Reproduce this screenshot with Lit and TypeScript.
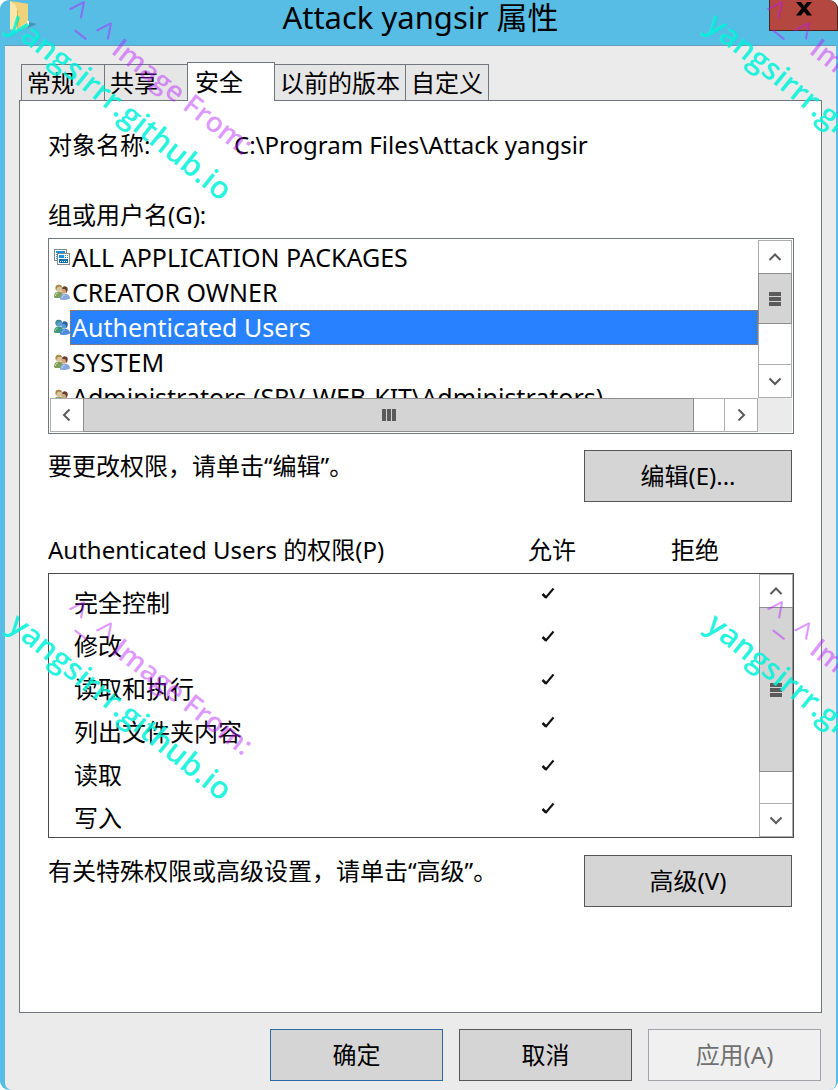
import { LitElement, html, css, svg, nothing } from "lit";
import { customElement, property, state } from "lit/decorators.js";

type Principal = { name: string; icon: "package" | "users" };

const PRINCIPALS: Principal[] = [
  { name: "ALL APPLICATION PACKAGES", icon: "package" },
  { name: "CREATOR OWNER", icon: "users" },
  { name: "Authenticated Users", icon: "users" },
  { name: "SYSTEM", icon: "users" },
  { name: "Administrators (SRV-WEB-KIT\\Administrators)", icon: "users" },
];

const PERMISSIONS = ["完全控制", "修改", "读取和执行", "列出文件夹内容", "读取", "写入"];
const TABS = ["常规", "共享", "安全", "以前的版本", "自定义"];

const CHEVRONS: Record<string, string> = {
  up: "M0.500 9 6 3.500 11.500 9",
  down: "M0.500 3.500 6 9 11.500 3.500",
  left: "M8.500 0.500 3 6 8.500 11.500",
  right: "M3.500 0.500 9 6 3.500 11.500",
};

/** Flat scroll bar with two arrow buttons and a gripped thumb. */
@customElement("scroll-bar")
export class ScrollBar extends LitElement {
  @property({ reflect: true }) axis: "x" | "y" = "y";
  @property({ type: Number }) rest = 40;

  static styles = css`
    :host {
      display: flex;
      box-sizing: border-box;
      background: #fff;
      border: 1px solid #adadad;
    }
    :host([axis="y"]) {
      flex-direction: column;
      width: 34px;
    }
    :host([axis="x"]) {
      height: 34px;
    }
    .arrow {
      flex: none;
      display: flex;
      align-items: center;
      justify-content: center;
      width: 32px;
      height: 32px;
      padding: 0;
      border: 0;
      background: #fff;
    }
    .arrow svg {
      width: 12px;
      height: 12px;
      fill: none;
      stroke: #5a5a5a;
      stroke-width: 2;
    }
    .thumb {
      flex: 1;
      display: flex;
      align-items: center;
      justify-content: center;
      gap: 1px;
      background: #d4d4d4;
      border: 1px solid #8e8e8e;
    }
    :host([axis="y"]) .thumb {
      flex-direction: column;
      margin: 0 -1px;
    }
    :host([axis="x"]) .thumb {
      margin: -1px 0;
    }
    .grip {
      width: 4px;
      height: 12px;
      background: #5a5a5a;
    }
    :host([axis="y"]) .grip {
      width: 12px;
      height: 4px;
    }
    .rest {
      flex: none;
      border: 0 solid #adadad;
    }
    :host([axis="y"]) .rest {
      border-bottom-width: 1px;
    }
    :host([axis="x"]) .rest {
      border-right-width: 1px;
    }
  `;

  private arrow(dir: string, label: string) {
    return html`<button class="arrow" aria-label=${label}>
      <svg viewBox="0 0 12 12" aria-hidden="true"><path d=${CHEVRONS[dir]} /></svg>
    </button>`;
  }

  render() {
    const y = this.axis === "y";
    return html`
      ${this.arrow(y ? "up" : "left", y ? "向上" : "向左")}
      <div class="thumb"><i class="grip"></i><i class="grip"></i><i class="grip"></i></div>
      <div class="rest" style=${`${y ? "height" : "width"}:${this.rest}px`}></div>
      ${this.arrow(y ? "down" : "right", y ? "向下" : "向右")}
    `;
  }
}

/** 16px icon in front of a group or user name. */
@customElement("principal-icon")
export class PrincipalIcon extends LitElement {
  @property() kind = "users";
  @property({ type: Boolean }) selected = false;

  static styles = css`
    :host {
      display: block;
      width: 16px;
      height: 16px;
    }
    svg {
      display: block;
      width: 16px;
      height: 16px;
    }
  `;

  private packages() {
    return svg`
      <rect x="0.5" y="0.5" width="12" height="11" fill="#fff" stroke="#7d8a92"/>
      <rect x="2" y="2" width="9" height="2" fill="#1c8fd6"/>
      <path d="M2 5.500h2M2 7.500h1M2 9.500h1" stroke="#1c8fd6"/>
      <rect x="3.500" y="4.500" width="12" height="11" fill="#fff" stroke="#7d8a92"/>
      <rect x="5" y="6" width="5" height="3" fill="#1c8fd6"/>
      <path d="M11 6.500h1M13 6.500h1M11 8.500h1M13 8.500h1" stroke="#1c8fd6"/>
      <rect x="5" y="10" width="9" height="4" fill="#0d6fae"/>
      <path d="M6 12.500h1M8 12.500h1M10 12.500h1M12 12.500h1" stroke="#fff"/>`;
  }

  private users() {
    const s = this.selected;
    return svg`
      <path d="M0 13C0 9 2 7.500 5 7.500S9 9 9 12l-2 2H1z" fill=${s ? "#3f9a78" : "#7d9f58"}/>
      <path d="M1.500 12c0-2 1-3 2.500-3" fill="none" stroke=${s ? "#8fd6a0" : "#cfe0ac"}/>
      <circle cx="4.800" cy="4.300" r="3.200" fill=${s ? "#5c9ccc" : "#dcc29a"}/>
      <path d="M1.500 5C1 1.500 3 .5 5 .8c2 0 3 1.200 3 2.700C6 2.500 4.500 2.500 3.500 3.300 2.800 4.300 2.500 5 2.500 6z" fill=${s ? "#3c8a92" : "#a8894c"}/>
      <path d="M6 15.500c0-4 1.500-5.500 5-5.500s5 2 5 4.500c-2 1.500-7 2-10 1z" fill=${s ? "#4c8be0" : "#86a8de"}/>
      <path d="M8 14c.3-2 1.300-3 3-3" fill="none" stroke=${s ? "#8fc0ff" : "#cbdcf8"}/>
      <circle cx="10.200" cy="6.800" r="3" fill=${s ? "#5a9ad6" : "#d0a680"}/>
      <path d="M8 4.500C8.500 2 11 1.500 12.800 3c1.400 1 1.200 4-.3 6-.3-2-1-3.500-2-4-1 0-1.700.2-2.500-.5z" fill=${s ? "#2a62a4" : "#66402c"}/>`;
  }

  render() {
    return html`<svg viewBox="0 0 16 16" aria-hidden="true">
      ${this.kind === "package" ? this.packages() : this.users()}
    </svg>`;
  }
}

@customElement("app-root")
export class AppRoot extends LitElement {
  @state() private tab = 2;
  @state() private current = 2;

  static styles = css`
    :host {
      display: block;
      position: relative;
      background: #fff;
      color: #000;
      font-family: "Noto Sans", "Noto Sans CJK SC", sans-serif;
      font-size: 24px;
      line-height: 36px;
    }
    button {
      font: inherit;
      color: inherit;
    }
    .window {
      display: flex;
      flex-direction: column;
      box-sizing: border-box;
      min-height: 100vh;
      padding: 0 2px 0 5px;
      border-radius: 9px;
      background: #58bde4;
    }
    .title {
      display: grid;
      grid-template-columns: 67px 1fr 67px;
      align-items: start;
      height: 45px;
    }
    .folder {
      width: 32px;
      height: 34px;
      margin-left: 4px;
    }
    .caption {
      margin: 0;
      text-align: center;
      font-size: 31px;
      font-weight: 400;
      line-height: 34px;
      white-space: nowrap;
    }
    .close {
      display: flex;
      justify-content: center;
      box-sizing: border-box;
      width: 69px;
      height: 31px;
      padding: 2px 0 0;
      border: 1px solid #4b2525;
      border-top: 0;
      border-radius: 0 9px 0 0;
      background: #b4473f;
    }
    .close svg {
      width: 16px;
      height: 14px;
    }
    .body {
      flex: 1;
      display: flex;
      flex-direction: column;
      padding: 17px 14px 9px;
      border-radius: 0 0 7px 7px;
      background: #ebebeb;
      box-shadow: inset 0 1px #6c9db5;
    }
    .tabs {
      display: flex;
      align-items: flex-end;
      padding-left: 2px;
    }
    .tab {
      height: 36px;
      padding: 0 5px;
      border: 1px solid #72767f;
      border-bottom: 0;
      border-left-width: 0;
      background: #e6e6e6;
      text-align: left;
      line-height: 36px;
      white-space: nowrap;
    }
    .tab:first-child {
      border-left-width: 1px;
    }
    .short {
      width: 84px;
    }
    .tab.active {
      z-index: 1;
      width: 88px;
      height: 39px;
      margin: 0 0 -1px -2px;
      padding: 0 7px;
      border-left-width: 1px;
      background: #fff;
    }
    .panel {
      flex: 1;
      padding: 26px 27px 24px 28px;
      border: 1px solid #72767f;
      background: #fff;
    }
    .object {
      display: grid;
      grid-template-columns: 186px 1fr;
      margin: 0 0 34px;
    }
    .object dd {
      margin: 0;
    }
    .label {
      margin: 0 0 5px;
    }
    .list {
      display: grid;
      grid-template-columns: 1fr 34px;
      grid-template-rows: 158px 34px;
      padding: 1px;
      border: 1px solid #72767f;
    }
    .names {
      margin: 0;
      padding: 0;
      list-style: none;
      overflow: hidden;
      font-size: 25px;
    }
    .name {
      display: grid;
      grid-template-columns: 16px 1fr;
      padding-left: 4px;
      height: 35px;
      line-height: 35px;
    }
    .name principal-icon {
      margin-top: 9px;
    }
    .text {
      box-sizing: border-box;
      height: 35px;
      padding-left: 2px;
      white-space: nowrap;
    }
    .name[aria-selected="true"] .text {
      background: #2882ff;
      color: #fff;
      outline: 1px dotted #d0702a;
      outline-offset: -1px;
    }
    .corner {
      background: #ebebeb;
    }
    .action {
      display: flex;
      justify-content: space-between;
      margin: 16px 2px 0 0;
    }
    .hint {
      margin: 0;
      line-height: 32px;
    }
    .push {
      box-sizing: border-box;
      width: 208px;
      height: 52px;
      padding: 0;
      border: 1px solid #565656;
      background: #d5d5d5;
    }
    .perm {
      display: grid;
      grid-template-columns: 1fr 34px;
      grid-template-rows: 41px 265px;
      margin: 30px 0 17px;
    }
    .grid {
      display: block;
      grid-area: 1 / 1 / 3 / 3;
    }
    .grid thead {
      display: block;
      height: 41px;
    }
    .grid tbody {
      display: block;
      box-sizing: border-box;
      height: 265px;
      padding-top: 8px;
      overflow: hidden;
      border: 1px solid #4a4a4a;
    }
    .row {
      display: grid;
      grid-template-columns: 1fr 143px 123px;
    }
    .row th,
    .row td {
      padding: 0;
      font-weight: 400;
      text-align: left;
    }
    .entry th {
      height: 43px;
      padding-left: 25px;
      line-height: 42px;
    }
    .entry td {
      padding: 5px 0 0 14px;
      line-height: 0;
    }
    .tick {
      width: 14px;
      height: 13px;
      fill: none;
      stroke: #111;
    }
    .permbar {
      grid-area: 2 / 2;
      margin: 1px 1px 1px -1px;
    }
    .last {
      margin-top: 0;
    }
    .footer {
      display: flex;
      justify-content: flex-end;
      gap: 16px;
      padding: 16px 1px 0 0;
    }
    .footer .push {
      width: 173px;
    }
    .footer .default {
      border-color: #2a6aa8;
    }
    .push:disabled {
      border-color: #a0a4a8;
      background: #f0f0f0;
      color: #707070;
    }
    .marks {
      position: absolute;
      inset: 0;
      z-index: 2;
      display: grid;
      grid-template-columns: 698px 698px;
      grid-auto-rows: 600px;
      overflow: hidden;
      pointer-events: none;
      font-family: "Open Sans", "Noto Sans", sans-serif;
    }
    .mark {
      width: 300px;
      height: 260px;
      overflow: visible;
    }
    .from {
      font-size: 28px;
      fill: rgb(182 20 255 / 45%);
      font-weight: 600;
    }
    .face {
      font-size: 34px;
      font-weight: 400;
    }
    .site {
      font-size: 31px;
      fill: rgb(0 243 218 / 85%);
      font-weight: 600;
    }
  `;

  private mark() {
    return html`<svg class="mark" viewBox="0 0 300 260">
      <text class="from" transform="translate(62 15) rotate(38)"><tspan class="face">^_^</tspan> Image From:</text>
      <text class="site" transform="translate(6 28) rotate(39)">yangsirrr.github.io</text>
    </svg>`;
  }

  private tick() {
    return html`<svg class="tick" viewBox="0 0 14 13" role="img" aria-label="允许">
      <path d="M1.500 7 5 10.500" stroke-width="2.500" />
      <path d="M4.500 11 12.500 1.500" stroke-width="2" />
    </svg>`;
  }

  render() {
    return html`
      <main class="window">
        <header class="title">
          <svg class="folder" viewBox="0 0 32 34" aria-hidden="true">
            <path d="M17 29 28 24l-8-2z" fill="#3c7590" opacity=".55" />
            <path d="M1 1 8 2l11 2v23l-10 3z" fill="#e9c868" />
            <path d="M5 2 19 4v23l-6 2z" fill="#efd27c" />
            <path d="M1 1 6 4 9 11v21L1 29z" fill="#f9e7a8" />
            <path d="M8.500 10v21" stroke="#d9b350" fill="none" />
            <path d="M18 21h2v5h-2z" fill="#fff" />
          </svg>
          <h1 class="caption">Attack yangsir 属性</h1>
          <button class="close" aria-label="关闭">
            <svg viewBox="0 0 16 14" aria-hidden="true">
              <path d="M0 0h5l3 4 3-4h5l-5.500 6.500L16 13.500h-5L8 9.500l-3 4H0l5.500-7z" />
            </svg>
          </button>
        </header>
        <div class="body">
          <div class="tabs" role="tablist">
            ${TABS.map(
              (t, i) => html`<button
                class="tab ${i === this.tab ? "active" : t.length < 3 ? "short" : ""}"
                role="tab"
                aria-selected=${i === this.tab}
                @click=${() => (this.tab = i)}
              >${t}</button>`
            )}
          </div>
          <section class="panel" role="tabpanel">
            <dl class="object">
              <dt>对象名称:</dt>
              <dd>C:\\Program Files\\Attack yangsir</dd>
            </dl>
            <p class="label" id="names-label">组或用户名(G):</p>
            <div class="list">
              <ul class="names" role="listbox" aria-labelledby="names-label">
                ${PRINCIPALS.map(
                  (p, i) => html`<li
                    class="name"
                    role="option"
                    aria-selected=${i === this.current}
                    @click=${() => (this.current = i)}
                  >
                    <principal-icon .kind=${p.icon} .selected=${i === this.current}></principal-icon>
                    <span class="text">${p.name}</span>
                  </li>`
                )}
              </ul>
              <scroll-bar axis="y" .rest=${40}></scroll-bar>
              <scroll-bar axis="x" .rest=${30}></scroll-bar>
              <div class="corner"></div>
            </div>
            <div class="action">
              <p class="hint">要更改权限，请单击“编辑”。</p>
              <button class="push">编辑(E)...</button>
            </div>
            <div class="perm">
              <table class="grid">
                <thead>
                  <tr class="row">
                    <th scope="col">${PRINCIPALS[this.current].name} 的权限(P)</th>
                    <th scope="col">允许</th>
                    <th scope="col">拒绝</th>
                  </tr>
                </thead>
                <tbody>
                  ${PERMISSIONS.map(
                    (p) => html`<tr class="row entry">
                      <th scope="row">${p}</th>
                      <td>${this.tick()}</td>
                      <td>${nothing}</td>
                    </tr>`
                  )}
                </tbody>
              </table>
              <scroll-bar class="permbar" axis="y" .rest=${31}></scroll-bar>
            </div>
            <div class="action last">
              <p class="hint">有关特殊权限或高级设置，请单击“高级”。</p>
              <button class="push">高级(V)</button>
            </div>
          </section>
          <footer class="footer">
            <button class="push default">确定</button>
            <button class="push">取消</button>
            <button class="push" disabled>应用(A)</button>
          </footer>
        </div>
      </main>
      <div class="marks" aria-hidden="true">
        ${[0, 1, 2, 3].map(() => this.mark())}
      </div>
    `;
  }
}
